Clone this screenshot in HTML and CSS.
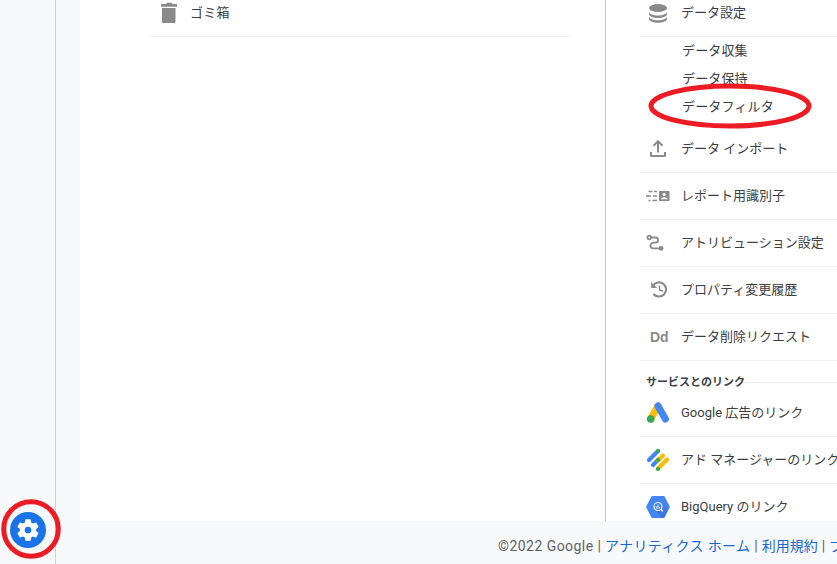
FILE: index.html
```
<!DOCTYPE html>
<html lang="ja">
<head>
<meta charset="utf-8">
<title>管理</title>
<link rel="stylesheet" href="styles.css">
</head>
<body>
<div class="app">
  <aside class="sidebar">
    <button class="gear" aria-label="管理">
      <svg width="26" height="26" viewBox="0 0 24 24" fill="#fff"><path d="M19.43 12.98c.04-.32.07-.64.07-.98s-.03-.66-.07-.98l2.11-1.65c.19-.15.24-.42.12-.64l-2-3.46c-.12-.22-.39-.3-.61-.22l-2.49 1c-.52-.4-1.08-.73-1.69-.98l-.38-2.65C14.46 2.18 14.25 2 14 2h-4c-.25 0-.46.18-.49.42l-.38 2.65c-.61.25-1.17.59-1.69.98l-2.49-1c-.23-.09-.49 0-.61.22l-2 3.46c-.13.22-.07.49.12.64l2.11 1.65c-.04.32-.07.65-.07.98s.03.66.07.98l-2.11 1.65c-.19.15-.24.42-.12.64l2 3.46c.12.22.39.3.61.22l2.49-1c.52.4 1.08.73 1.69.98l.38 2.65c.03.24.24.42.49.42h4c.25 0 .46-.18.49-.42l.38-2.65c.61-.25 1.17-.59 1.69-.98l2.49 1c.23.09.49 0 .61-.22l2-3.46c.12-.22.07-.49-.12-.64z"/><circle cx="12" cy="12" r="3.1" fill="#1a73e8"/></svg>
    </button>
  </aside>
  <main class="main">
    <div class="columns">
      <section class="account">
        <div class="row">
          <span class="icon"><svg width="24" height="24" viewBox="0 0 24 24" fill="#8a8a8a"><path d="M4 3h5l1-1.300h4.500l1 1.300H20v2.700H4zM5 7h13.500v13.800q0 1.200-1 1.200H6q-1 0-1-1.200z"/></svg></span>
          <span class="label">ゴミ箱</span>
        </div>
      </section>
      <section class="property">
        <div class="row first">
          <span class="icon"><svg width="24" height="24" viewBox="0 0 24 24"><ellipse cx="12" cy="7" rx="9" ry="4" fill="#8a8a8a"/><path d="M3 10.700c1 5 17 5 18 0v2.500c-1 5-17 5-18 0zM3 15.400c1 5 17 5 18 0v2.500c-1 5-17 5-18 0z" fill="#8a8a8a"/></svg></span>
          <span class="label">データ設定</span>
        </div>
        <ul class="sub">
          <li>データ収集</li>
          <li>データ保持</li>
          <li class="marked">データフィルタ
            <svg class="ring-wide" width="164" height="46" viewBox="0 0 164 46"><ellipse cx="82" cy="23" rx="79" ry="20" fill="none" stroke="#ed1c24" stroke-width="5"/></svg>
          </li>
        </ul>
        <div class="row">
          <span class="icon"><svg width="24" height="24" viewBox="0 0 24 24" fill="none" stroke="#8a8a8a" stroke-width="2"><path d="M12 15.500V4.500M7.500 8.700 12 4.200l4.500 4.500M5 15v3.500q0 .5.500.5h13q.500 0 .500-.500V15"/></svg></span>
          <span class="label">データ インポート</span>
        </div>
        <div class="row">
          <span class="icon"><svg width="24" height="24" viewBox="0 0 24 24"><path d="M2.500 7.500h4M8 7.500h3M0 12h5M7 12h4M2.500 16.500h2M6.500 16.500H11" stroke="#8a8a8a" stroke-width="1.700"/><rect x="13" y="7" width="10.500" height="10" rx=".8" fill="#8a8a8a"/><circle cx="18.200" cy="10.500" r="1.600" fill="#fff"/><path d="M15 15.300v-.8q3.200-2.500 6.400 0v.8z" fill="#fff"/></svg></span>
          <span class="label">レポート用識別子</span>
        </div>
        <div class="row">
          <span class="icon"><svg width="24" height="24" viewBox="0 0 24 24"><g fill="none" stroke="#8a8a8a" stroke-width="1.800"><circle cx="3.200" cy="6.500" r="1.800"/><path d="M5 6.500h4.500a2.600 2.600 0 0 1 0 5.200H7.200a2.800 2.800 0 0 0 0 5.600H14"/></g><circle cx="15" cy="17.300" r="2.400" fill="#8a8a8a"/></svg></span>
          <span class="label">アトリビューション設定</span>
        </div>
        <div class="row">
          <span class="icon"><svg width="24" height="24" viewBox="0 0 24 24" fill="none" stroke="#8a8a8a"><path d="M7 7.600A7.100 7.100 0 1 1 7.500 16" stroke-width="2.100"/><path d="M5.200 4V10h6z" fill="#8a8a8a" stroke="none"/><path d="M13.500 7.500V12l3.500 1" stroke-width="1.500"/></svg></span>
          <span class="label">プロパティ変更履歴</span>
        </div>
        <div class="row">
          <span class="icon dd">Dd</span>
          <span class="label">データ削除リクエスト</span>
        </div>
        <h2 class="heading"><span>サービスとのリンク</span></h2>
        <div class="row">
          <span class="icon"><svg width="24" height="24" viewBox="0 0 24 24" fill="none" stroke-linecap="round"><path d="M12 5 4.700 18" stroke="#fbbc04" stroke-width="7"/><path d="M12 5 19.400 18" stroke="#4285f4" stroke-width="7"/><circle cx="4.700" cy="18" r="3.800" fill="#34a853"/></svg></span>
          <span class="label">Google 広告のリンク</span>
        </div>
        <div class="row">
          <span class="icon"><svg width="24" height="24" viewBox="0 0 24 24" fill="none" stroke-width="4.200" stroke-linecap="round"><path d="m3 12 9-9M7 17l6-6" stroke="#4285f4"/><path d="m12 12.500 5-5M12 20.500l9-9" stroke="#fbbc04"/><path d="M12 3h.01M12 12h.01M12 21h.01" stroke="#34a853"/></svg></span>
          <span class="label">アド マネージャーのリンク</span>
        </div>
        <div class="row">
          <span class="icon"><svg width="24" height="24" viewBox="0 0 24 24"><path d="M6.400 1h11.200q.7 0 1 .6l5 9.700q.4.700 0 1.400l-5 9.700q-.3.600-1 .6H6.400q-.7 0-1-.6l-5-9.700q-.4-.7 0-1.400l5-9.700q.3-.6 1-.6z" fill="#4285f4"/><path d="m16 9.500 5.500 6-3.200 6.800q-.3.700-1 .7h-1.300l-6.200-7z" fill="#3b77dc"/><g fill="none" stroke="#fff"><circle cx="12" cy="11.500" r="4" stroke-width="1.200"/><path d="m14.800 14.300 2 2" stroke-width="1.600"/><path d="M10.300 11.500v2M12 9.500V14M13.700 12v1.500" stroke-width=".9"/></g></svg></span>
          <span class="label">BigQuery のリンク</span>
        </div>
      </section>
    </div>
    <footer class="footer"><span class="copy">©2022 Google</span><i>|</i><a>アナリティクス ホーム</a><i>|</i><a>利用規約</a><i>|</i><a>プライバシー ポリシー</a></footer>
  </main>
</div>
<svg class="ring-round" width="60" height="60" viewBox="0 0 60 60"><circle cx="30" cy="30" r="27.300" fill="none" stroke="#ed1c24" stroke-width="5"/></svg>
</body>
</html>
```

FILE: styles.css
```
* { box-sizing: border-box; }
body {
  margin: 0;
  height: 564px;
  overflow: hidden;
  position: relative;
  background: #f8f9fb;
  color: #3c4043;
  font: 13px/20px Roboto, "Noto Sans CJK JP", sans-serif;
}
.app { display: flex; height: 564px; }
.sidebar {
  width: 56px;
  flex: none;
  border-right: 1px solid #cfd1d4;
  display: flex;
  align-items: flex-end;
  padding: 0 0 16px 10px;
}
.gear {
  width: 36px;
  height: 36px;
  padding: 0;
  border: 0;
  border-radius: 50%;
  background: #1a73e8;
  display: flex;
  align-items: center;
  justify-content: center;
}
.gear svg { flex: none; }
.main { flex: 1; min-width: 0; padding-left: 24px; }
.columns { display: flex; height: 521px; overflow: hidden; background: #fff; }
.account {
  width: 526px;
  flex: none;
  padding: 0 35px 0 70px;
  border-right: 1px solid #c8c8c8;
}
.account .row { margin-top: -10px; padding-left: 7px; }
.account .label { margin-left: 9px; letter-spacing: .3px; }
.property { flex: 1; min-width: 0; padding-left: 34px; }
.row {
  display: flex;
  align-items: center;
  height: 47px;
  padding-left: 6px;
  border-bottom: 1px solid #f1f1f1;
  white-space: nowrap;
}
.first { margin-top: -10px; }
.icon { width: 24px; height: 24px; flex: none; }
.icon svg { display: block; }
.label { margin-left: 11px; }
.dd {
  font: bold 14px/24px "Liberation Sans", sans-serif;
  color: #8a8a8a;
  padding-left: 4px;
}
.sub { list-style: none; margin: 0 0 5px; padding: 0 0 0 42px; letter-spacing: .15px; }
.sub li { height: 28px; line-height: 28px; }
.marked { position: relative; }
.ring-wide { position: absolute; left: -34px; top: -10px; }
.heading {
  margin: 0;
  height: 29px;
  padding: 13px 0 0 6px;
  font-size: 11px;
  line-height: 18px;
  font-weight: 700;
  background: linear-gradient(#ececec, #ececec) 0 21px / 100% 1px no-repeat;
}
.heading span { display: block; width: 99px; height: 16px; background: #fff; }
.footer {
  display: flex;
  height: 43px;
  padding: 6px 0 0 418px;
  align-items: center;
  white-space: nowrap;
  overflow: hidden;
  font-size: 14px;
  color: #5f6368;
}
.copy { letter-spacing: .45px; font-weight: 400; width: 96px; }
.footer i { font-style: normal; margin: 0 4px; }
.footer a { color: #1967d2; }
.footer a:first-of-type { letter-spacing: .35px; }
.ring-round { position: absolute; left: 1px; top: 499px; }
```
